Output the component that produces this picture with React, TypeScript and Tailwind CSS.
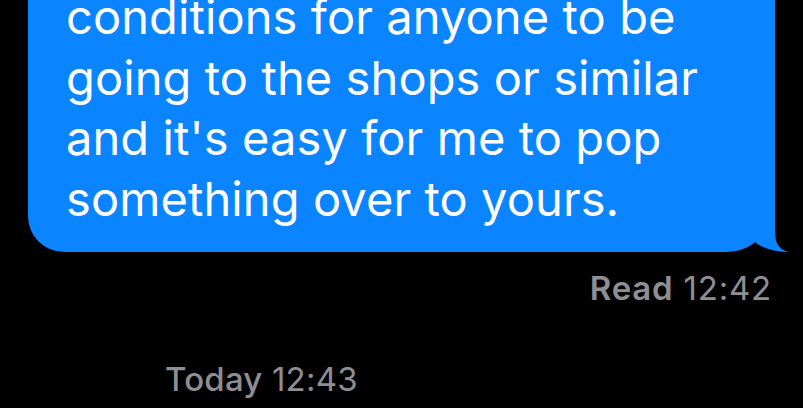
const lines = [
  "conditions for anyone to be",
  "going to the shops or similar",
  "and it's easy for me to pop",
  "something over to yours.",
];

const BubbleTail = () => (
  <svg
    className="absolute right-[-20px] bottom-0"
    width="80"
    height="60"
    viewBox="0 0 80 60"
  >
    <rect x="0" y="0" width="80" height="60" fill="#000" />
    <path
      d="M0,0 H60 V40 C60,53 66,59 75,60 C62,60 48,57 40,50 C34,56 22,60 10,60 H0 Z"
      fill="#0a84ff"
    />
  </svg>
);

export default function App() {
  return (
    <div
      className="h-[408px] w-full overflow-hidden bg-black flex flex-col"
      style={{ fontFamily: "Inter, 'Noto Sans', sans-serif" }}
    >
      <div className="pl-[28px] -mt-[60px]">
        <div className="relative w-[747px] bg-[#0a84ff] rounded-[36px] rounded-br-none pl-[38px] pr-4 pt-[47px] pb-[23px]">
          {lines.map((l) => (
            <div key={l} className="text-white text-[47px] leading-[60.5px] tracking-[0.1px] whitespace-nowrap">
              {l}
            </div>
          ))}
          <BubbleTail />
        </div>
      </div>

      <div className="flex justify-end pr-[31px] mt-[16px]">
        <span className="text-[#8e8e93] text-[33px] leading-[40px] tracking-[0.8px]">
          <span className="font-semibold">Read</span> 12:42
        </span>
      </div>

      <div className="pl-[165px] mt-[51px]">
        <span className="text-[#8e8e93] text-[33px] leading-[40px] tracking-[0.2px]">
          <span className="font-medium">Today</span> 12:43
        </span>
      </div>
    </div>
  );
}
